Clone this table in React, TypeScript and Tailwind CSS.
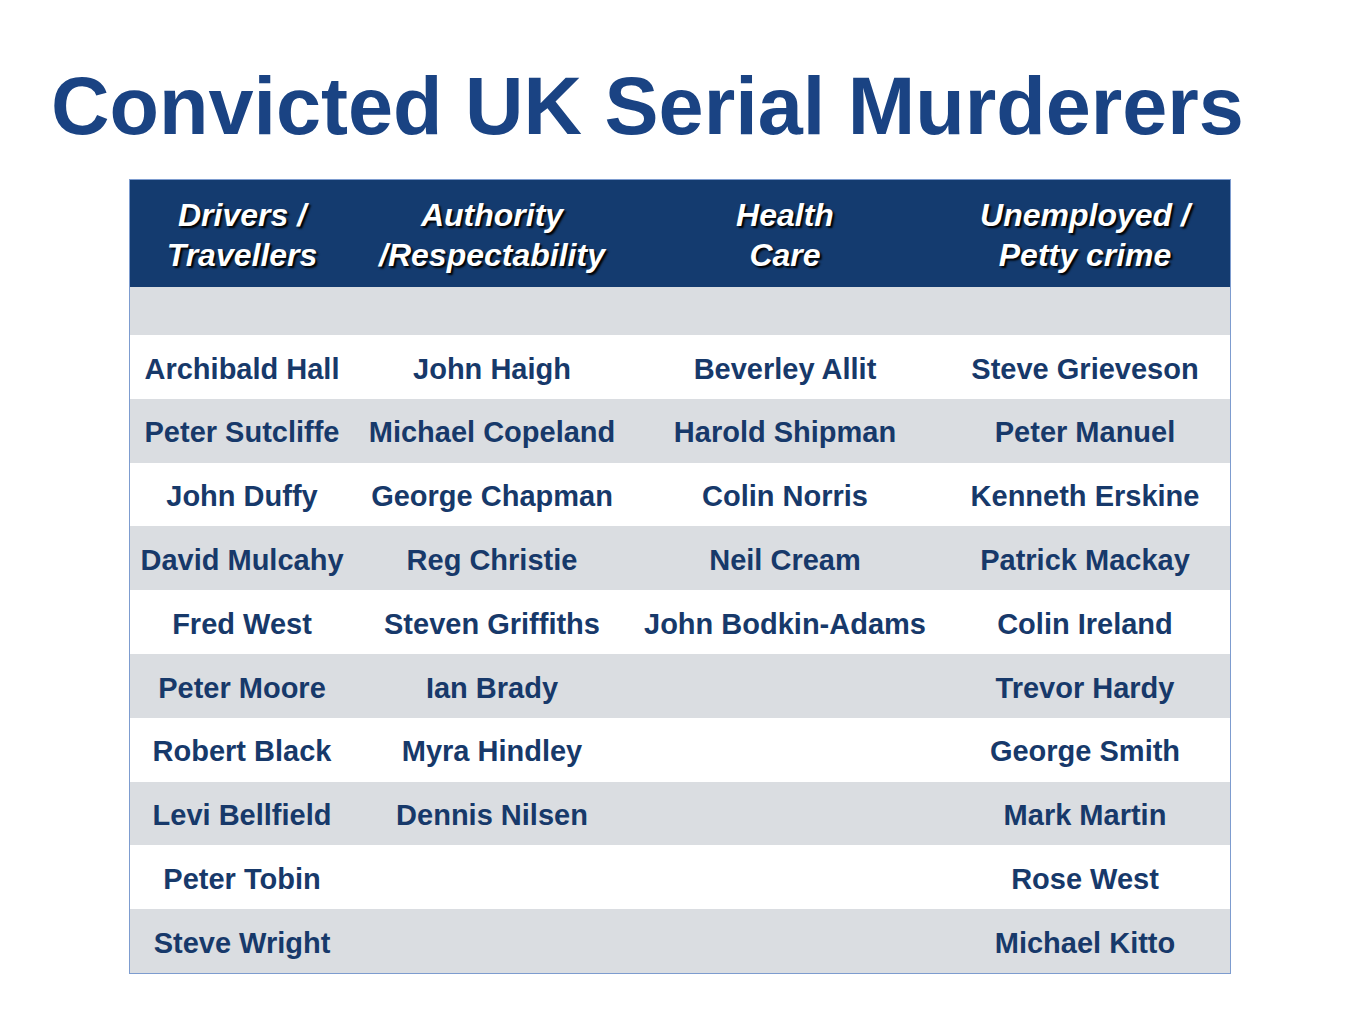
import React from "react";

const headers: [string, string][] = [
  ["Drivers /", "Travellers"],
  ["Authority", "/Respectability"],
  ["Health", "Care"],
  ["Unemployed /", "Petty crime"],
];

const rows: string[][] = [
  ["Archibald Hall", "John Haigh", "Beverley Allit", "Steve Grieveson"],
  ["Peter Sutcliffe", "Michael Copeland", "Harold Shipman", "Peter Manuel"],
  ["John Duffy", "George Chapman", "Colin Norris", "Kenneth Erskine"],
  ["David Mulcahy", "Reg Christie", "Neil Cream", "Patrick Mackay"],
  ["Fred West", "Steven Griffiths", "John Bodkin-Adams", "Colin Ireland"],
  ["Peter Moore", "Ian Brady", "", "Trevor Hardy"],
  ["Robert Black", "Myra Hindley", "", "George Smith"],
  ["Levi Bellfield", "Dennis Nilsen", "", "Mark Martin"],
  ["Peter Tobin", "", "", "Rose West"],
  ["Steve Wright", "", "", "Michael Kitto"],
];

const cols = "grid grid-cols-[224px_276px_310px_290px]";

export default function App() {
  return (
    <div
      className="w-[1365px] h-[1024px] bg-white overflow-hidden"
      style={{ fontFamily: '"Liberation Sans", Arial, sans-serif' }}
    >
      <h1 className="pt-[66px] pl-[51px] text-[81px] leading-none font-bold text-[#1a4383] whitespace-nowrap">
        Convicted UK Serial Murderers
      </h1>
      <div className="mt-[32px] ml-[129px] w-[1102px] border border-[#7d9ccf]">
        <div className={`${cols} h-[107px] bg-[#143b6f]`}>
          {headers.map((h, i) => (
            <div
              key={i}
              className="flex flex-col items-center justify-center pt-[2px] text-white italic font-bold text-[32px] leading-[40px] [text-shadow:2px_2px_2px_#000]"
            >
              <span>{h[0]}</span>
              <span>{h[1]}</span>
            </div>
          ))}
        </div>
        <div className="h-[48px] bg-[#dadde1]" />
        {rows.map((r, i) => (
          <div
            key={i}
            className={`${cols} h-[63.8px] ${i % 2 === 1 ? "bg-[#dadde1]" : "bg-white"}`}
          >
            {r.map((c, j) => (
              <div
                key={j}
                className="flex items-center justify-center pt-[5px] text-[29px] font-bold text-[#17396a] whitespace-nowrap"
              >
                {c}
              </div>
            ))}
          </div>
        ))}
      </div>
    </div>
  );
}
